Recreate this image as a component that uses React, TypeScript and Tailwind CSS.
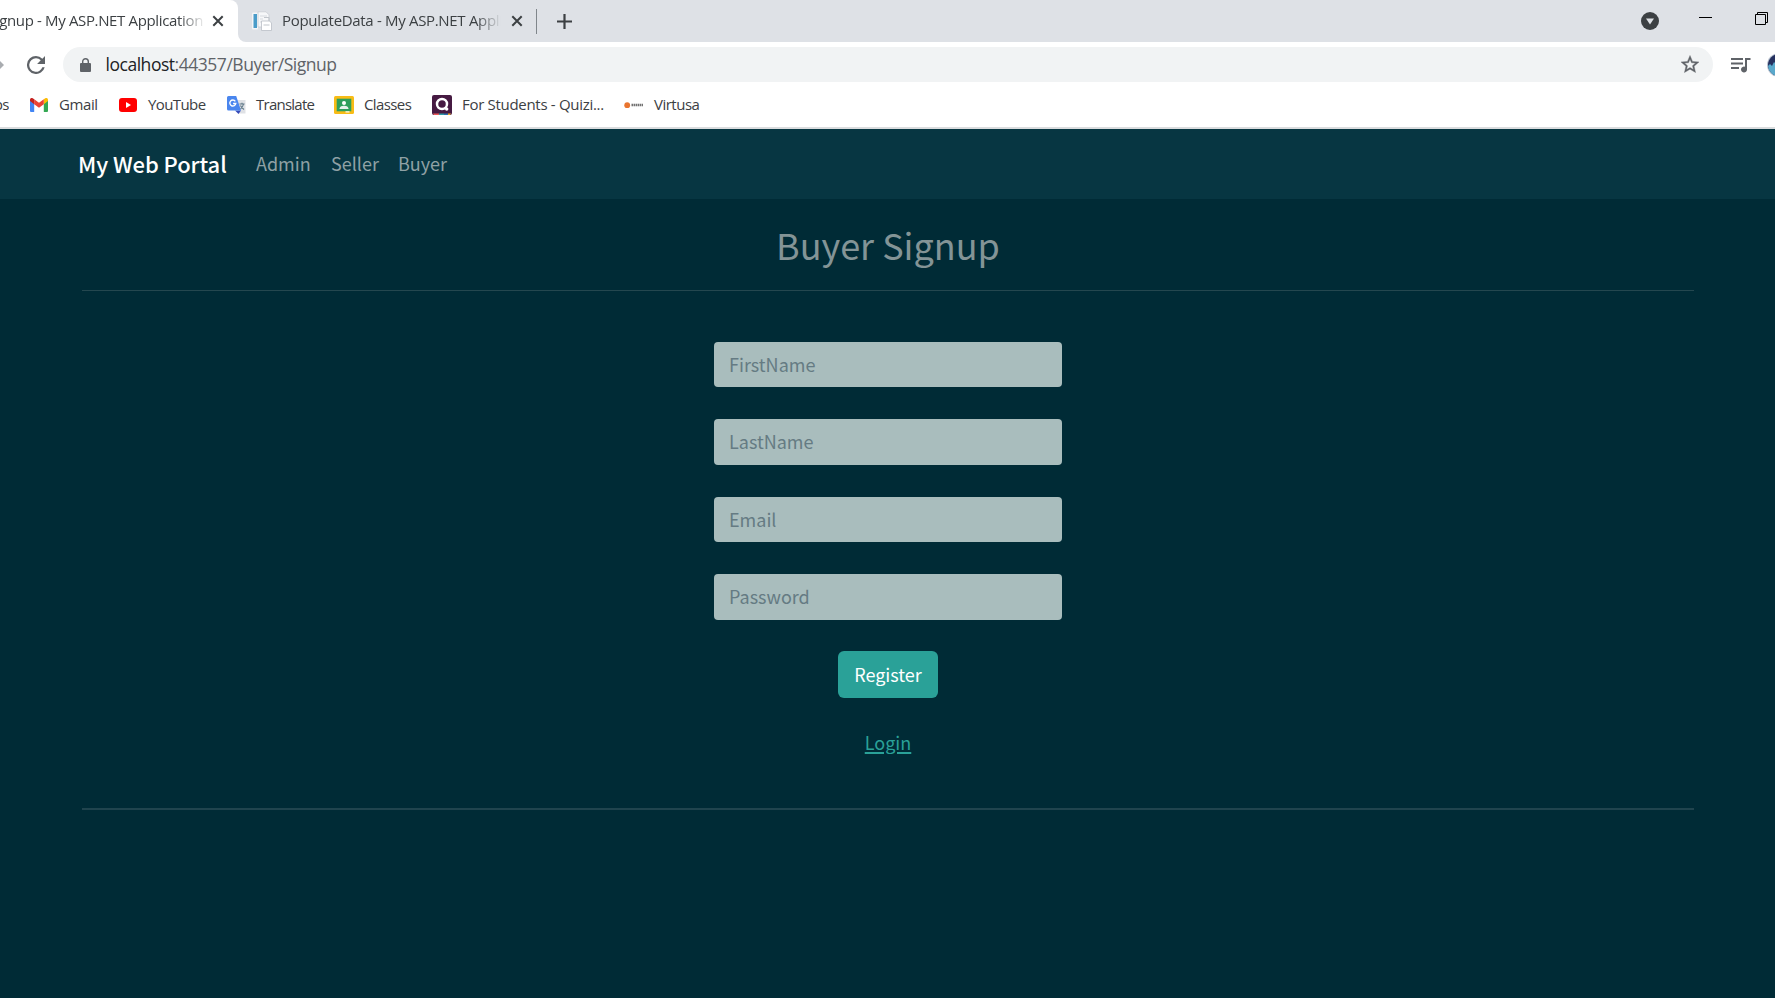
import React from "react";

const T = ({ c, children }: { c: string; children: React.ReactNode }) => (
  <span className={"whitespace-nowrap shrink-0 " + c}>{children}</span>
);

const GmailIcon = () => (
  <svg width="18" height="14" viewBox="0 0 18 14">
    <path d="M0 2.2V13a1 1 0 0 0 1 1h3.2V5.3Z" fill="#4285f4" />
    <path d="M18 2.2V13a1 1 0 0 1-1 1h-3.200V5.3Z" fill="#34a853" />
    <path d="M13.800 1.200V6.200L18 3V1.800C18 .2 16.200-.6 14.900.4Z" fill="#fbbc04" />
    <path d="M4.200 6.200V1.200L9 4.800l4.800-3.600v5L9 9.800Z" fill="#ea4335" />
    <path d="M0 1.800V3l4.200 3.200v-5L3.100.4C1.800-.6 0 .2 0 1.800Z" fill="#c5221f" />
  </svg>
);

const YouTubeIcon = () => (
  <svg width="18" height="14" viewBox="0 0 18 14">
    <rect width="18" height="14" rx="3" fill="#f00" />
    <path d="M7 4v6l5-3Z" fill="#fff" />
  </svg>
);

const TranslateIcon = () => (
  <svg width="20" height="20" viewBox="0 0 20 20">
    <path d="M7 5h11.500v13.500H12Z" fill="#dfe1e5" />
    <path d="M8 15.500h6l-2.500 3.500Z" fill="#3549b8" />
    <path d="M1.500 1h7.700l4.800 14.500H1.500A1.500 1.500 0 0 1 0 14V2.500A1.500 1.500 0 0 1 1.500 1Z" fill="#4a86ee" />
    <path d="M8.300 6.300a3 3 0 1 0 .5 2.200H6.100" fill="none" stroke="#fff" strokeWidth="1.400" />
    <path d="M12.500 9h5M15 7.800V9M16.500 9c-.5 2.500-1.500 4-3 5M13.500 10.500c.8 1.800 2 3 3.500 4" fill="none" stroke="#607988" strokeWidth="1.100" />
  </svg>
);

const ClassesIcon = () => (
  <svg width="20" height="18" viewBox="0 0 20 18">
    <rect width="20" height="18" rx="1.500" fill="#f8bc16" />
    <rect x="2.700" y="2.700" width="14.600" height="12.600" fill="#2f9f5b" />
    <circle cx="10" cy="7" r="2" fill="#fff" />
    <path d="M5.500 13c0-2.500 2.500-3.200 4.500-3.200s4.500.7 4.500 3.200Z" fill="#e8f3ec" />
    <path d="M11.500 15.300h4v1.200h-4Z" fill="#fff" />
  </svg>
);

const QuizIcon = () => (
  <svg width="20" height="20" viewBox="0 0 20 20">
    <rect width="20" height="20" rx="2" fill="#461a42" />
    <circle cx="10" cy="9" r="5" fill="none" stroke="#fff" strokeWidth="2.500" />
    <circle cx="14.700" cy="14" r="1.700" fill="#fff" />
    <path d="M1 18.500h6V20H2Z" fill="#ec5a5a" />
    <path d="M7 18.500h5V20H7Z" fill="#2d9da6" />
    <path d="M12 18.500h4V20h-4Z" fill="#2d70ae" />
    <path d="M16 18.500h3L18 20h-2Z" fill="#efa929" />
  </svg>
);

const VirtusaIcon = () => (
  <svg width="20" height="8" viewBox="0 0 20 8">
    <circle cx="3.200" cy="4.200" r="2.900" fill="#e9752f" />
    <path d="M7.500 4h11.500" stroke="#444" strokeWidth="2.600" strokeDasharray="1.600 .5" opacity=".75" />
  </svg>
);

const CloseIcon = () => (
  <svg width="12" height="12" viewBox="0 0 12 12" className="shrink-0">
    <path d="M1.300 1.300l9.400 9.400M10.700 1.300l-9.400 9.400" stroke="#3c4043" strokeWidth="2" />
  </svg>
);

const DocIcon = () => (
  <svg width="20" height="20" viewBox="0 0 20 20" className="shrink-0">
    <rect x="0" y="1.500" width="6" height="17" rx="1" fill="#f4f5f7" />
    <rect x="1.500" y="3" width="3.500" height="14" fill="#4a9cc9" />
    <path d="M6 .8h8l3 3V16H6Z" fill="#f6f7f9" stroke="#c9cdd3" strokeWidth=".8" />
    <path d="M8 5h7M8 8h3M8 11h1.500" stroke="#d5d9de" />
    <path d="M9.500 10h8l2 2v7.500h-10Z" fill="#fff" stroke="#b9bec5" strokeWidth=".8" />
    <path d="M11.500 14h6M12 6.500h5v3.500" fill="none" stroke="#c0c5cb" strokeWidth="1" />
  </svg>
);

const bookmarks = [
  { name: "Gmail", icon: <GmailIcon />, item: "w-[89px]", gap: "w-[29px]", text: "tracking-[-0.4px]" },
  { name: "YouTube", icon: <YouTubeIcon />, item: "w-[108px]", gap: "w-[29px]", text: "tracking-[-0.6px]" },
  { name: "Translate", icon: <TranslateIcon />, item: "w-[107px]", gap: "w-[29px]", text: "tracking-[-0.75px]" },
  { name: "Classes", icon: <ClassesIcon />, item: "w-[98px]", gap: "w-[30px]", text: "tracking-[-0.6px]" },
  { name: "For Students - Quizi...", icon: <QuizIcon />, item: "w-[192px]", gap: "w-[30px]", text: "tracking-[-0.3px]" },
  { name: "Virtusa", icon: <VirtusaIcon />, item: "w-[100px]", gap: "w-[30px]", text: "tracking-[-0.5px]" },
];

const TabStrip = () => (
  <div className="flex h-[42px] bg-white">
    <div className="-mr-2 h-4 w-[246px] shrink-0 bg-[#dee1e6]">
      <div className="flex h-[42px] w-[238px] items-center rounded-tr-lg bg-white">
        <div className="mb-[2px] flex w-[203px] shrink-0 justify-end overflow-hidden text-[15px] text-[#3c4043] [mask-image:linear-gradient(to_right,#000_178px,transparent_206px)]">
          <T c="tracking-[-0.35px]">Signup - My ASP.NET Application</T>
        </div>
        <div className="ml-[9px] flex"><CloseIcon /></div>
      </div>
    </div>
    <div className="flex flex-1 items-center rounded-bl-lg bg-[#dee1e6]">
      <div className="ml-[14px] flex"><DocIcon /></div>
      <div className="mb-[2px] ml-[10px] w-[219px] overflow-hidden text-[15px] text-[#3c4043] [mask-image:linear-gradient(to_right,#000_194px,transparent_219px)]">
        <T c="tracking-[-0.32px]">PopulateData - My ASP.NET Application</T>
      </div>
      <div className="ml-[10px] flex"><CloseIcon /></div>
      <div className="ml-[13px] h-[25px] w-px bg-[#80868b]" />
      <svg width="15" height="15" viewBox="0 0 15 15" className="ml-[20px]">
        <path d="M7.500 0v15M0 7.500h15" stroke="#3c4043" strokeWidth="2.200" />
      </svg>
      <div className="flex-1" />
      <svg width="18" height="18" viewBox="0 0 18 18">
        <circle cx="9" cy="9" r="9" fill="#3c4043" />
        <path d="M5 6.500h8l-4 6Z" fill="#dee1e6" />
      </svg>
      <div className="mb-[7px] ml-[40px] h-px w-[13px] bg-black" />
      <svg width="13" height="13" viewBox="0 0 13 13" className="mb-[5px] ml-[43px] mr-[7px]">
        <path d="M.5 2.500h10v10H.5ZM2.500 2.500v-2h10v10h-2" fill="none" stroke="#000" />
      </svg>
    </div>
  </div>
);

const Toolbar = () => (
  <div className="flex h-[45px] items-center bg-white">
    <svg width="4" height="14" viewBox="0 0 4 14">
      <path d="M0 3l4 4-4 4Z" fill="#a9acb0" />
    </svg>
    <svg width="18" height="18" viewBox="4 4 16 16" className="ml-[23px]">
      <path d="M17.650 6.350A7.960 7.960 0 0 0 12 4a8 8 0 1 0 7.730 10h-2.080A6 6 0 1 1 12 6c1.660 0 3.140.69 4.220 1.780L13 11h7V4Z" fill="#5f6368" />
    </svg>
    <div className="ml-[18px] flex h-[35px] w-[1650px] items-center rounded-full bg-[#f1f3f4] text-[17.5px]">
      <svg width="11" height="14" viewBox="0 0 11 14" className="ml-[17px]">
        <path d="M2.700 6V3.500a2.800 2.800 0 0 1 5.600 0V6" fill="none" stroke="#5f6368" strokeWidth="1.400" />
        <rect y="5" width="11" height="9" rx="1" fill="#5f6368" />
      </svg>
      <T c="ml-[14.5px] tracking-[-0.47px] text-[#5f6368]">
        <span className="text-[#202124]">localhost</span>:44357/Buyer/Signup
      </T>
      <div className="flex-1" />
      <svg width="18" height="18" viewBox="2 2 20 19" className="mb-[2px] mr-[14px]">
        <path d="M22 9.240l-7.190-.62L12 2 9.190 8.630 2 9.240l5.460 4.730L5.820 21 12 17.270 18.180 21l-1.630-7.030L22 9.240zM12 15.400l-3.760 2.270 1-4.280-3.320-2.880 4.380-.38L12 6.100l1.710 4.040 4.380.38-3.320 2.880 1 4.280L12 15.400z" fill="#5f6368" stroke="#5f6368" strokeWidth=".4" />
      </svg>
    </div>
    <svg width="20" height="16" viewBox="0 0 20 16" className="ml-[18px]">
      <path d="M0 1h12v2H0ZM0 5.500h12v2H0ZM0 10h8v2H0ZM14 1h5.500v2H16v9.500a3 3 0 1 1-2-2.800Z" fill="#5f6368" />
    </svg>
    <div className="ml-[16px] flex h-6 w-[8px] overflow-hidden">
      <svg width="24" height="24" viewBox="0 0 24 24" className="shrink-0">
        <circle cx="12" cy="12" r="12" fill="#b9c3d0" />
        <circle cx="12" cy="12" r="11" fill="#25305f" />
        <path d="M1 13a11 11 0 0 0 11 10V10L9 11 7 9l-2 4-2-2Z" fill="#5aa9cc" />
      </svg>
    </div>
  </div>
);

const BookmarksBar = () => (
  <div className="flex h-[42px] items-center border-b-2 border-[#dadcde] bg-white pb-[5px] text-[15px] text-[#3c4043]">
    <div className="flex w-[30px] shrink-0">
      <div className="flex w-[9px] justify-end overflow-hidden"><T c="tracking-[-0.5px]">Apps</T></div>
    </div>
    {bookmarks.map((b) => (
      <div key={b.name} className={"flex shrink-0 items-center " + b.item}>
        <div className={"flex shrink-0 " + b.gap}>{b.icon}</div>
        <T c={b.text}>{b.name}</T>
      </div>
    ))}
  </div>
);

const Field = ({ label, h, type = "text" }: { label: string; h: string; type?: string }) => (
  <input
    type={type}
    placeholder={label}
    className={"block w-[348px] rounded bg-[#a9bdbd] px-[15px] pb-[2px] text-[18px] text-[#073642] outline-none placeholder:text-[#657b83] " + h}
  />
);

export default function App() {
  return (
    <div className="h-[998px] w-[1775px] overflow-hidden bg-[#002b36] font-['Noto_Sans_CJK_SC',sans-serif]">
      <div className="font-['Open_Sans',sans-serif]">
        <TabStrip />
        <Toolbar />
        <BookmarksBar />
      </div>
      <nav className="flex h-[70px] items-center bg-[#073642] pb-[2px] pl-[78px] text-[18px] text-[#8fa1a5]">
        <a className="w-[178px] whitespace-nowrap text-[22px] font-medium tracking-[-0.08px] text-white">My Web Portal</a>
        <a className="w-[75px]">Admin</a>
        <a className="w-[67px]">Seller</a>
        <a>Buyer</a>
      </nav>
      <main className="mx-[82px] flex w-[1612px] flex-col items-center text-[18px]">
        <h2 className="mt-[18px] h-[54px] text-[36px] leading-[54px] text-[#839496]">Buyer Signup</h2>
        <hr className="mt-[19px] h-px w-full border-0 bg-[#24474f]" />
        <form className="mt-[51px] flex flex-col items-center" onSubmit={(e) => e.preventDefault()}>
          <Field label="FirstName" h="h-[45px] mb-8" />
          <Field label="LastName" h="h-[46px] mb-8" />
          <Field label="Email" h="h-[45px] mb-8" />
          <Field label="Password" h="h-[46px] mb-[31px]" type="password" />
          <button className="h-[47px] w-[100px] rounded-md bg-[#2aa198] text-white">Register</button>
        </form>
        <a className="mt-[29px] h-[30px] leading-[30px] text-[#2aa198] underline decoration-2 underline-offset-2">Login</a>
        <hr className="mt-[51px] h-[2px] w-full border-0 bg-[#20444e]" />
      </main>
    </div>
  );
}
